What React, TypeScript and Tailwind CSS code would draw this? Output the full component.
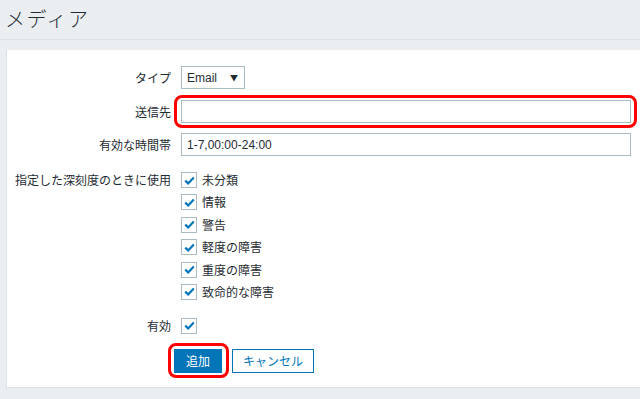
import React from "react";

const font = { fontFamily: '"Noto Sans CJK JP", "Noto Sans", sans-serif' };

function Check() {
  return (
    <span className="w-[16px] h-[16px] border border-[#acbbc2] bg-white flex items-center justify-center shrink-0">
      <svg width="11" height="9" viewBox="0 0 11 9">
        <path d="M1.2 4.6 L4.2 7.4 L9.8 1.6" fill="none" stroke="#0275b8" strokeWidth="2.2" />
      </svg>
    </span>
  );
}

export default function App() {
  const sev = ["未分類", "情報", "警告", "軽度の障害", "重度の障害", "致命的な障害"];
  return (
    <div className="w-[640px] h-[399px] bg-[#ebeef1] text-[#1f2c33] overflow-hidden" style={font}>
      <div className="h-[40px] border-b border-[#dde2e6] pl-[5px] pt-[4px]">
        <h1 className="text-[20px] leading-[30px] font-light tracking-[1.5px]">メディア</h1>
      </div>
      <div className="mt-[10px] ml-[6px] h-[338px] bg-white border-l border-b border-[#dde2e6] pt-[16px] pr-[9px] text-[12px]">
        <div className="flex items-center h-[23px]">
          <div className="w-[164px] text-right">タイプ</div>
          <div className="ml-[10px] h-[23px] w-[64px] border border-[#acbbc2] flex items-center justify-between pl-[5px] pr-[6px] text-[12px]">
            <span style={{ fontFamily: '"Liberation Sans", Arial, sans-serif' }}>Email</span>
            <span className="text-[8px]">▼</span>
          </div>
        </div>
        <div className="flex items-center h-[23px] mt-[11px]">
          <div className="w-[164px] text-right">送信先</div>
          <div className="ml-[3px] flex-1 relative">
            <div className="absolute -left-[0px] -top-[5px] -right-[6px] -bottom-[5px] border-[3px] border-[#ff0000] rounded-[8px]" />
            <div className="ml-[7px] h-[23px] border border-[#acbbc2] bg-white" />
          </div>
        </div>
        <div className="flex items-center h-[23px] mt-[10px]">
          <div className="w-[164px] text-right">有効な時間帯</div>
          <div className="ml-[10px] flex-1 h-[23px] border border-[#acbbc2] flex items-center px-[5px]" style={{ fontFamily: '"Liberation Sans", Arial, sans-serif' }}>
            1-7,00:00-24:00
          </div>
        </div>
        <div className="flex mt-[16px]">
          <div className="w-[164px] text-right pl-[8px] h-[16px] flex items-center justify-end whitespace-nowrap">指定した深刻度のときに使用</div>
          <div className="ml-[10px] flex flex-col">
            {sev.map((s) => (
              <div key={s} className="h-[22.4px] flex items-start">
                <div className="flex items-center gap-[5px] h-[16px]">
                  <Check />
                  <span>{s}</span>
                </div>
              </div>
            ))}
          </div>
        </div>
        <div className="flex items-center h-[16px] mt-[11.6px]">
          <div className="w-[164px] text-right">有効</div>
          <div className="ml-[10px]"><Check /></div>
        </div>
        <div className="flex mt-[15px] ml-[167px] gap-[10px]">
          <div className="relative">
            <div className="absolute -left-[6px] -top-[6px] -right-[7px] -bottom-[5px] border-[3px] border-[#ff0000] rounded-[8px]" />
            <button className="relative w-[48px] h-[24px] bg-[#0275b8] text-white text-[12px] border border-[#0275b8]">追加</button>
          </div>
          <button className="w-[82px] h-[24px] bg-white text-[#0275b8] text-[12px] border border-[#0275b8]">キャンセル</button>
        </div>
      </div>
    </div>
  );
}
